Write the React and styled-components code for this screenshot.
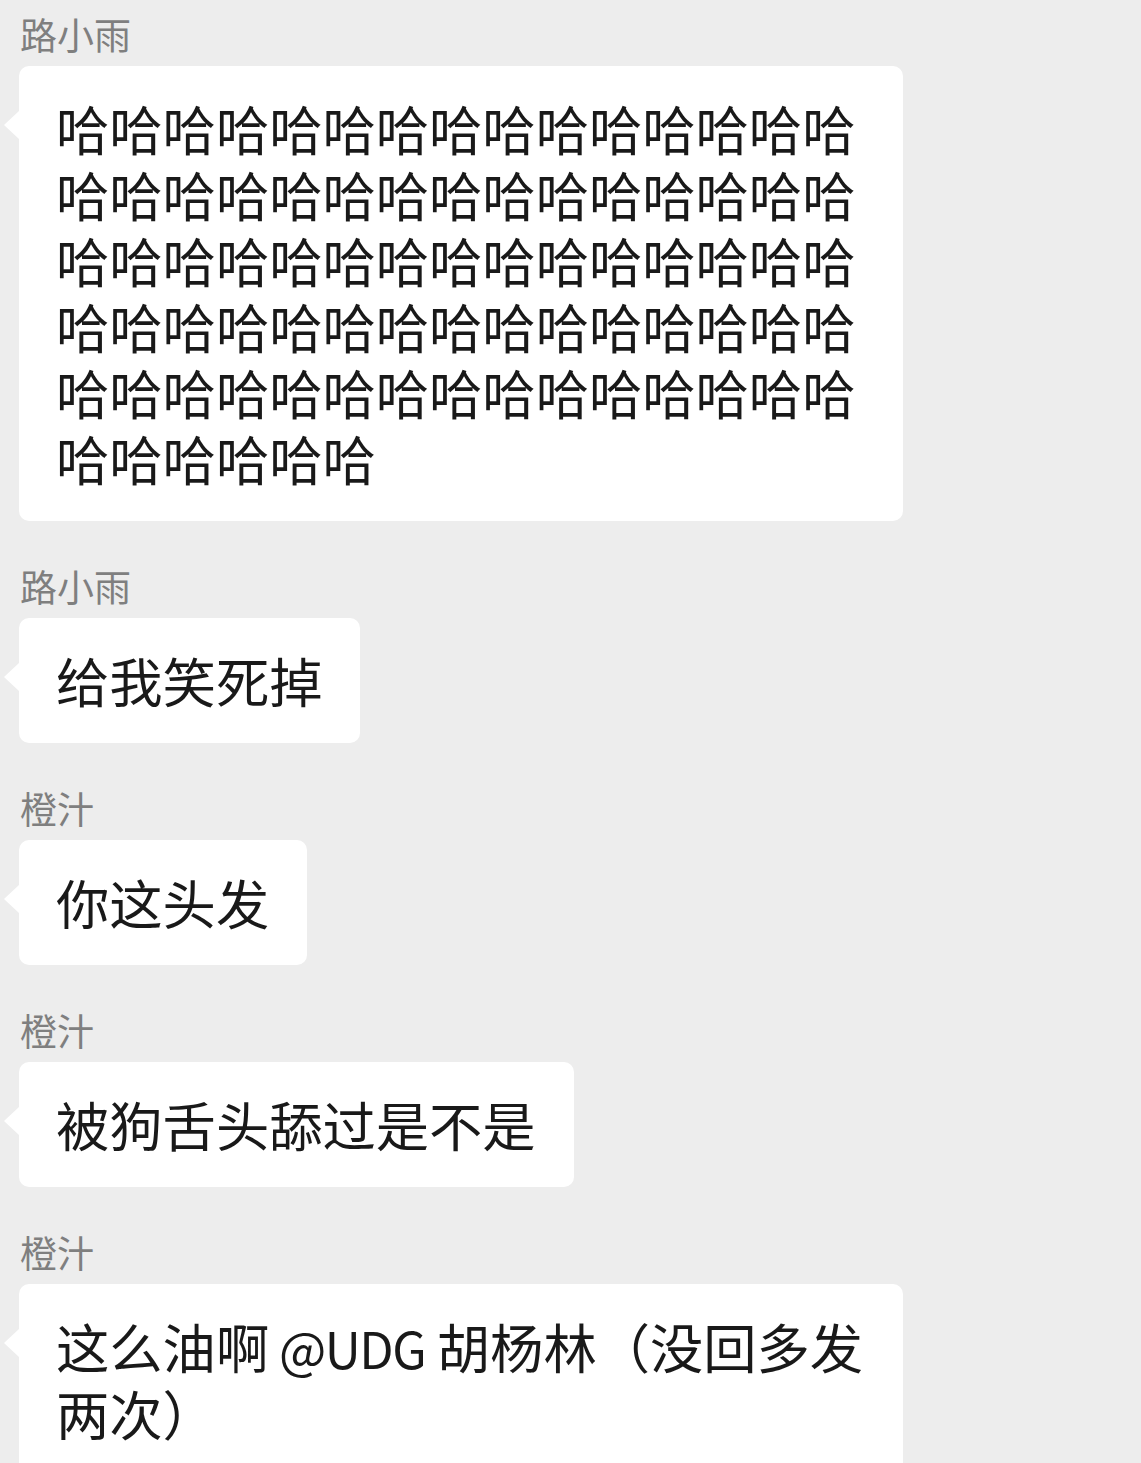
import React from "react";
import styled, { createGlobalStyle } from "styled-components";

const GlobalStyle = createGlobalStyle`
  html, body {
    margin: 0;
    padding: 0;
    background: #ededed;
  }
  body {
    font-family: "Noto Sans CJK SC", "Noto Sans", sans-serif;
    -webkit-font-smoothing: antialiased;
  }
`;

const Page = styled.div`
  display: flex;
  flex-direction: column;
  gap: 43px;
  padding: 12px 0 0 19px;
  min-height: 1463px;
  box-sizing: border-box;
  background: #ededed;
`;

const Group = styled.div`
  display: flex;
  flex-direction: column;
  align-items: flex-start;
  gap: 10px;
`;

const Name = styled.div`
  font-size: 37px;
  line-height: 44px;
  color: #7f7f7f;
  padding-left: 1px;
`;

const Bubble = styled.div`
  position: relative;
  box-sizing: border-box;
  max-width: 884px;
  padding: 29px 38px 30px 37px;
  background: #ffffff;
  border-radius: 10px;
  color: #191919;
  font-size: 53.3px;
  line-height: 66px;
  word-break: break-all;

  &::before {
    content: "";
    position: absolute;
    left: -15px;
    top: 45px;
    border-top: 14px solid transparent;
    border-bottom: 14px solid transparent;
    border-right: 15px solid #ffffff;
  }
`;

const Mention = styled.span`
  font-size: 50px;
  letter-spacing: -1.5px;
  padding: 0 2px 0 0;
`;

const messages = [
  { name: "路小雨", text: "哈".repeat(81) },
  { name: "路小雨", text: "给我笑死掉" },
  { name: "橙汁", text: "你这头发" },
  { name: "橙汁", text: "被狗舌头舔过是不是" },
  {
    name: "橙汁",
    text: (
      <>
        这么油啊<Mention> @UDG </Mention>胡杨林（没回多发两次）
      </>
    ),
  },
];

export default function App() {
  return (
    <>
      <GlobalStyle />
      <Page>
        {messages.map((m, i) => (
          <Group key={i}>
            <Name>{m.name}</Name>
            <Bubble>{m.text}</Bubble>
          </Group>
        ))}
      </Page>
    </>
  );
}
